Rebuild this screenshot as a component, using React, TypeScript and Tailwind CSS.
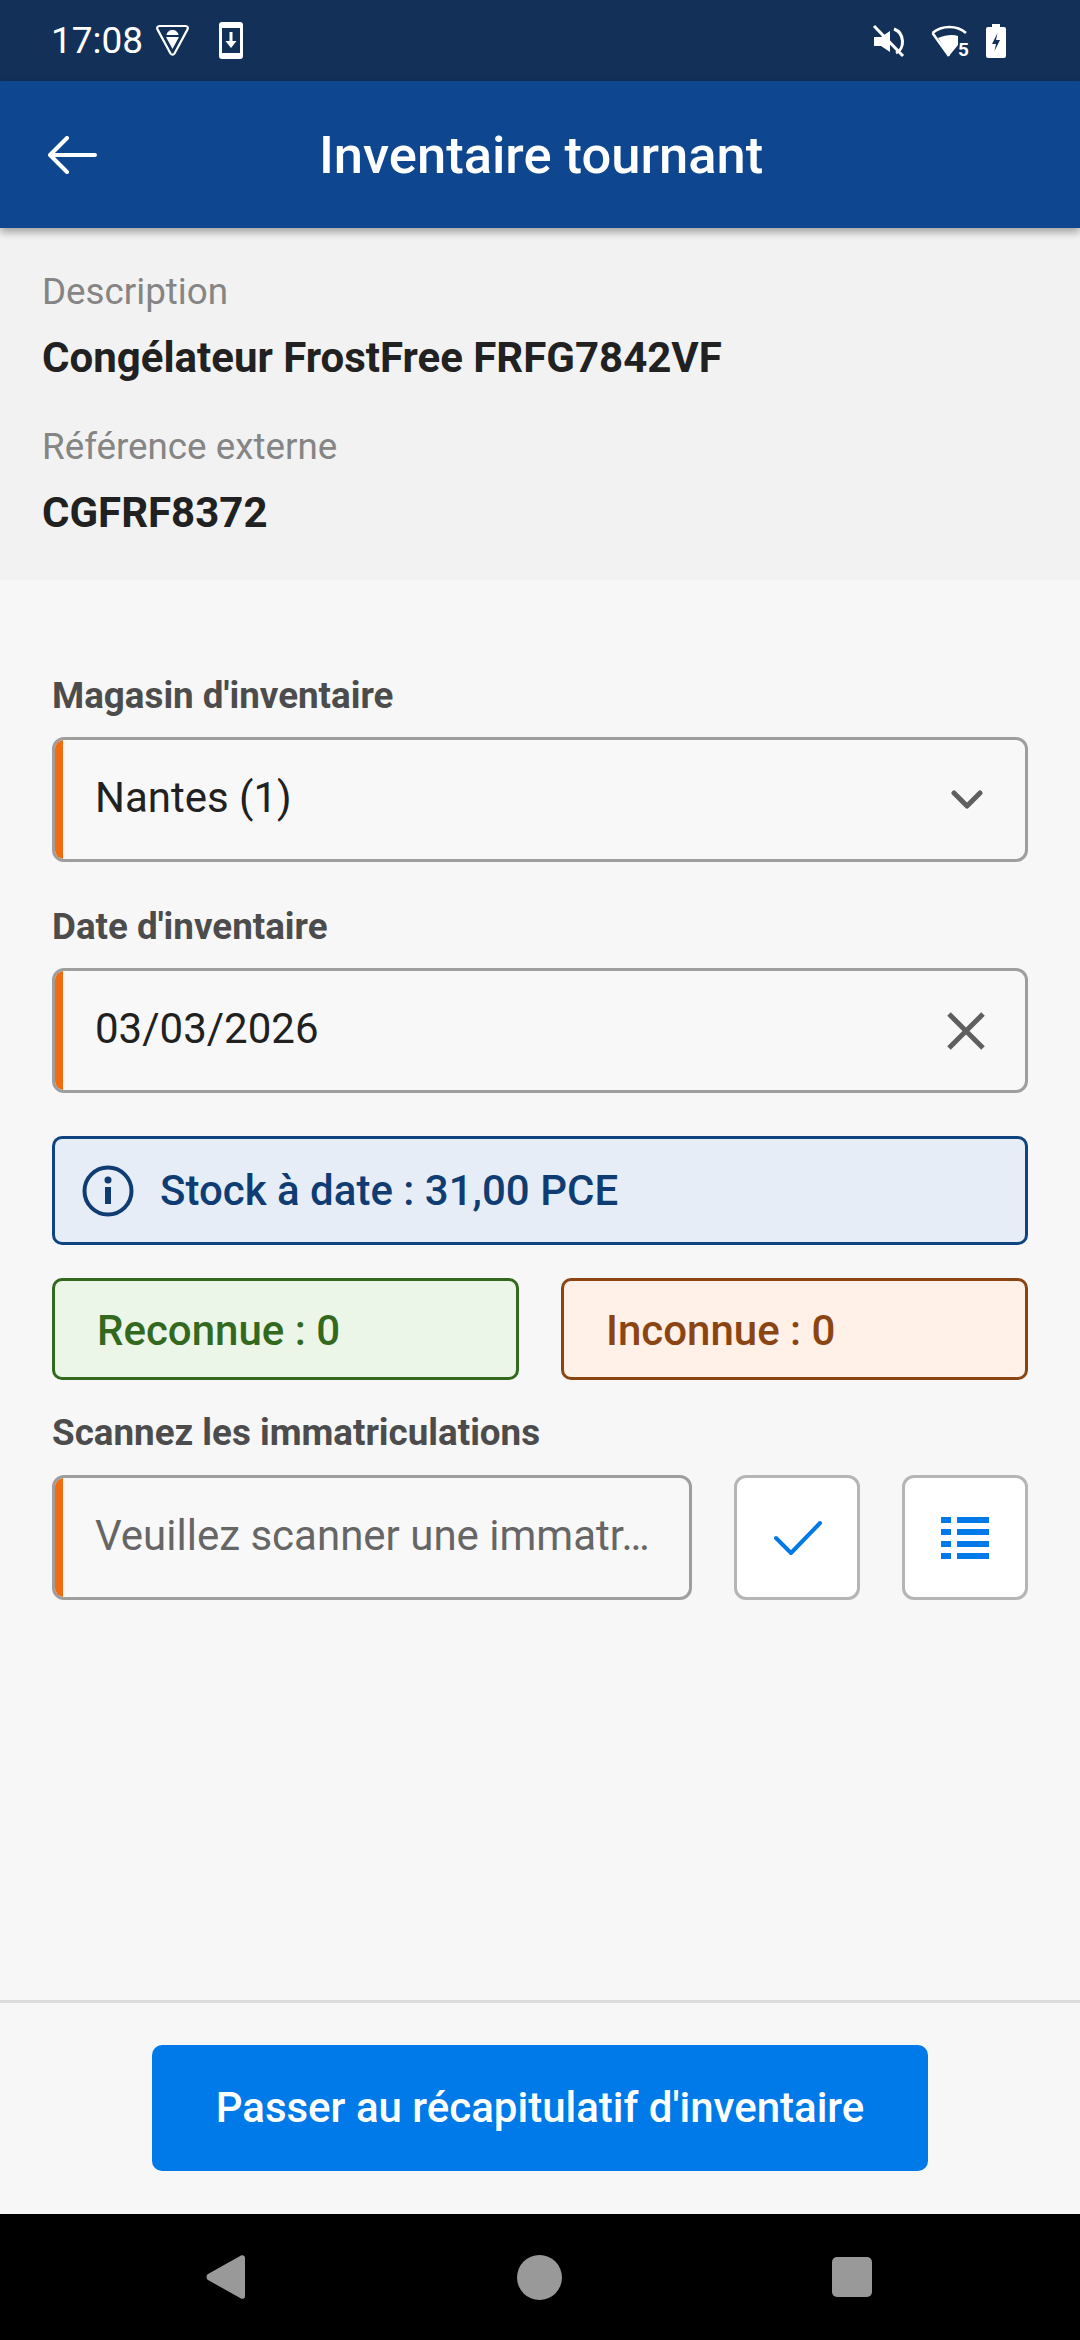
import React from 'react';

const font = { fontFamily: 'Roboto, sans-serif' };

// barre orange + contour gris des champs obligatoires
const Field = ({ className = '', children }: { className?: string; children: React.ReactNode }) => (
  <div className={`flex h-[125px] overflow-hidden rounded-[12px] border-[3px] border-[#9e9e9e] bg-[#f8f8f8] ${className}`}>
    <div className="w-[8px] shrink-0 bg-[#f26b0f]" />
    <div className="flex min-w-0 flex-1 items-center justify-between pb-[5px] pl-[32px] pr-[40px]">{children}</div>
  </div>
);

const Label = ({ children, className = '' }: { children: React.ReactNode; className?: string }) => (
  <div className={`h-[44px] text-[36.75px] leading-[44px] font-bold text-[#4c4c4c] ${className}`}>{children}</div>
);

const StatusBar = () => (
  <div className="flex h-[81px] shrink-0 items-center justify-between bg-[#133059] pl-[51px] pr-[74px] text-white">
    <div className="flex items-center">
      <span className="text-[37px] leading-none">17:08</span>
      <svg className="ml-[12px]" width="35" height="33" viewBox="0 0 34 33" fill="none">
        <path d="M4 2h26c2 0 3 1.800 2 3.400L19 29.500c-1 1.500-3 1.500-4 0L2 5.400C1 3.800 2 2 4 2z" stroke="white" strokeWidth="2.200" />
        <path d="M11 11c.4-3 3-5 6-5s5.600 2 6 5H11z" fill="white" />
        <path d="M10.500 13h13L17 25z" fill="white" />
      </svg>
      <svg className="ml-[29px]" width="24" height="37" viewBox="0 0 24 37">
        <path fillRule="evenodd" d="M3 0h18a3 3 0 0 1 3 3v31a3 3 0 0 1-3 3H3a3 3 0 0 1-3-3V3a3 3 0 0 1 3-3zM3 6v25h18V6H3z" fill="white" />
        <path d="M10.500 10h3v9h4L12 26l-5.500-7h4z" fill="white" />
      </svg>
    </div>
    <div className="flex items-center">
      <svg width="33" height="34" viewBox="0 0 33 34" fill="none">
        <path d="M2 2l29 30" stroke="white" strokeWidth="3" />
        <path d="M2 13h7l9-6v21l-9-6H2z" fill="white" />
        <path d="M22 5c11 4 11 20 2 24" stroke="white" strokeWidth="3" />
      </svg>
      <svg className="ml-[26px]" width="36" height="32" viewBox="0 0 36 32" fill="none">
        <path d="M1.500 8C11 0 26 0 35 8" stroke="white" strokeWidth="2.500" />
        <path d="M7 13c7-3 15-4 20-2v9l-9 11z" fill="white" />
        <path d="M1.500 8L18 31" stroke="white" strokeWidth="2.500" />
      </svg>
      <span className="-ml-[9px] mt-[18px] text-[19px] leading-none font-bold">5</span>
      <svg className="ml-[17px]" width="20" height="34" viewBox="0 0 20 34">
        <path fillRule="evenodd" d="M6 0h8v3h4a2 2 0 0 1 2 2v27a2 2 0 0 1-2 2H2a2 2 0 0 1-2-2V5a2 2 0 0 1 2-2h4zM11.500 9L6 20h4l-1.500 7L14 16h-4z" fill="white" />
      </svg>
    </div>
  </div>
);

const NavBar = () => (
  <div className="flex h-[126px] shrink-0 items-center justify-between bg-black pl-[205px] pr-[208px]">
    <svg width="42" height="46" viewBox="0 0 42 46">
      <path d="M3 20L36 1.500c2-1 4 .2 4 2.500v38c0 2.300-2 3.500-4 2.500L3 26c-2-1.300-2-4.700 0-6z" fill="#999999" />
    </svg>
    <div className="h-[45px] w-[45px] rounded-full bg-[#999999]" />
    <div className="h-[40px] w-[40px] rounded-[5px] bg-[#999999]" />
  </div>
);

export default function App() {
  return (
    <div className="flex h-[2340px] w-[1080px] flex-col bg-[#f7f7f7]" style={font}>
      <StatusBar />

      <header className="relative z-10 flex h-[147px] shrink-0 items-center bg-[#0e4790] pl-[47px] shadow-[0_4px_8px_rgba(0,0,0,0.35)]">
        <svg width="50" height="38" viewBox="0 0 50 38" fill="none" stroke="white" strokeWidth="4" strokeLinecap="round" strokeLinejoin="round">
          <path d="M48 19H3M20 2L3 19l17 17" />
        </svg>
        <h1 className="ml-[222px] pt-[2px] text-[52.5px] leading-none font-medium text-white">Inventaire tournant</h1>
      </header>

      <section className="h-[352px] shrink-0 bg-[#f2f2f2] pl-[42px] pt-[42px]">
        <div className="h-[44px] text-[36.75px] leading-[44px] text-[#858585]">Description</div>
        <div className="mt-[22px] h-[44px] text-[42px] leading-[44px] font-bold text-[#212121]">Congélateur FrostFree FRFG7842VF</div>
        <div className="mt-[45px] h-[44px] text-[36.75px] leading-[44px] text-[#858585]">Référence externe</div>
        <div className="mt-[22px] h-[44px] text-[42px] leading-[44px] font-bold text-[#212121]">CGFRF8372</div>
      </section>

      <main className="flex flex-1 flex-col px-[52px] pt-[94px]">
        <Label className="mb-[19px]">Magasin d'inventaire</Label>
        <Field>
          <span className="text-[42px] text-[#212121]">Nantes (1)</span>
          <svg className="mr-[2px] mt-[5px]" width="32" height="20" viewBox="0 0 32 20" fill="none" stroke="#5f5f5f" strokeWidth="5" strokeLinecap="round" strokeLinejoin="round">
            <path d="M3 3l13 13L29 3" />
          </svg>
        </Field>

        <Label className="mb-[19px] mt-[43px]">Date d'inventaire</Label>
        <Field>
          <span className="text-[42px] text-[#212121]">03/03/2026</span>
          <svg className="mt-[5px]" width="38" height="38" viewBox="0 0 38 38" fill="none" stroke="#5f5f5f" strokeWidth="5">
            <path d="M2 2l34 34M36 2L2 36" />
          </svg>
        </Field>

        <div className="mt-[43px] flex h-[109px] items-center rounded-[10px] border-[3px] border-[#0f4480] bg-[#e6edf6] pl-[27px]">
          <svg width="52" height="52" viewBox="0 0 52 52" fill="none">
            <circle cx="26" cy="26" r="23.500" stroke="#0f3d73" strokeWidth="4" />
            <circle cx="26" cy="15" r="3.500" fill="#0f3d73" />
            <rect x="23" y="22" width="6" height="17" fill="#0f3d73" />
          </svg>
          <span className="ml-[26px] text-[42px] font-medium text-[#0f3d73]">Stock à date : 31,00 PCE</span>
        </div>

        <div className="mt-[33px] flex gap-[42px]">
          <div className="flex h-[102px] flex-1 items-center rounded-[10px] border-[3px] border-[#33691e] bg-[#ebf6e8] pl-[42px] pt-[2px] text-[42px] font-medium text-[#33691e]">Reconnue : 0</div>
          <div className="flex h-[102px] flex-1 items-center rounded-[10px] border-[3px] border-[#8b4513] bg-[#fff0e8] pl-[42px] pt-[2px] text-[42px] font-medium text-[#8b4513]">Inconnue : 0</div>
        </div>

        <Label className="mb-[20px] mt-[31px]">Scannez les immatriculations</Label>
        <div className="flex gap-[42px]">
          <Field className="flex-1">
            <span className="whitespace-nowrap text-[42px] text-[#666666]">Veuillez scanner une immatr…</span>
          </Field>
          <button className="flex h-[125px] w-[126px] items-center justify-center rounded-[12px] border-[3px] border-[#b5b5b5] bg-white">
            <svg className="ml-[2px]" width="48" height="36" viewBox="0 0 48 36" fill="none" stroke="#007ae8" strokeWidth="4" strokeLinecap="round" strokeLinejoin="round">
              <path d="M2 18l15 15L46 3" />
            </svg>
          </button>
          <button className="flex h-[125px] w-[126px] items-center justify-center rounded-[12px] border-[3px] border-[#b5b5b5] bg-white">
            <svg width="48" height="42" viewBox="0 0 48 42" fill="#007ae8">
              <rect y="0" width="10" height="6" />
              <rect x="16" y="0" width="32" height="6" />
              <rect y="12" width="10" height="6" />
              <rect x="16" y="12" width="32" height="6" />
              <rect y="24" width="10" height="6" />
              <rect x="16" y="24" width="32" height="6" />
              <rect y="36" width="10" height="6" />
              <rect x="16" y="36" width="32" height="6" />
            </svg>
          </button>
        </div>
      </main>

      <footer className="flex h-[214px] shrink-0 items-start justify-center border-t-[3px] border-[#dcdcdc] bg-[#f7f7f7] pt-[42px]">
        <button className="h-[126px] w-[776px] rounded-[10px] bg-[#007ae8] pb-[2px] text-[42px] font-medium text-white">Passer au récapitulatif d'inventaire</button>
      </footer>

      <NavBar />
    </div>
  );
}
